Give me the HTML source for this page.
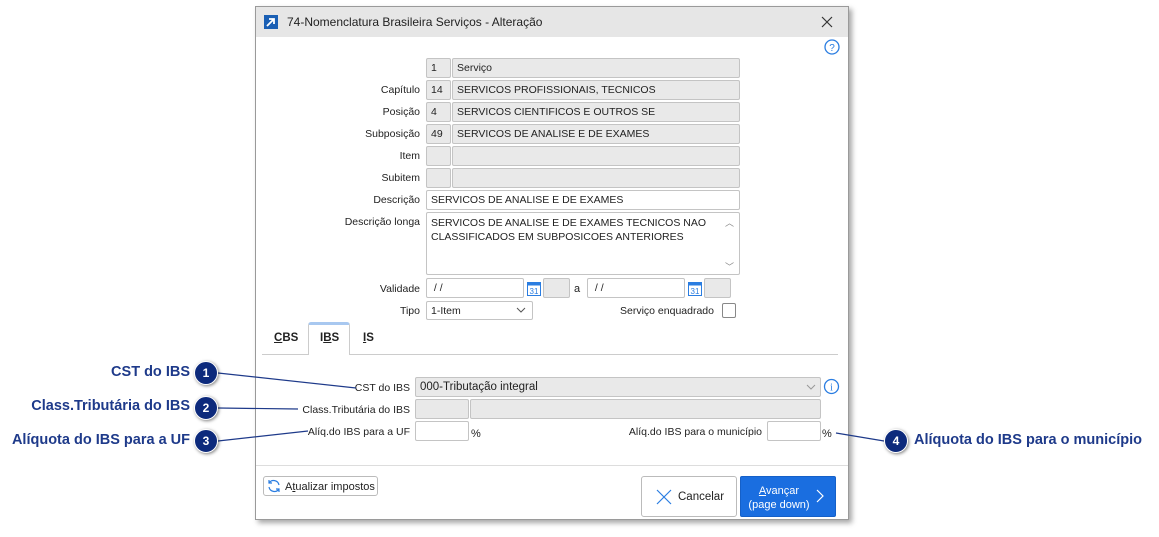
<!DOCTYPE html>
<html><head><meta charset="utf-8"><style>
*{box-sizing:border-box;margin:0;padding:0}
body{width:1159px;height:537px;background:#fff;position:relative;overflow:hidden;font-family:"Liberation Sans",sans-serif;font-size:11px;color:#222}
.a{position:absolute}
.dlg{left:255px;top:6px;width:594px;height:514px;background:#fff;border:1px solid #9a9a9a;box-shadow:3px 3px 5px rgba(0,0,0,.35)}
.title{left:0;top:0;width:592px;height:30px;background:#e6e6e6}
.f{position:absolute;height:20px;border:1px solid #c4c4c4;border-radius:2px;background:#e9e9e9;padding:3px 4px;white-space:nowrap;overflow:hidden;font-size:10.5px}
.w{background:#fff}
.l{position:absolute;text-align:right;white-space:nowrap;font-size:10.5px}
.cl{position:absolute;color:#1e3a8a;font-weight:bold;font-size:14.5px;white-space:nowrap}
.c{position:absolute;width:24px;height:24px;border-radius:50%;background:#0d2a7c;color:#fff;font-weight:bold;font-size:12px;text-align:center;line-height:22px;box-shadow:1px 1px 3px rgba(0,0,0,.5);border:1px solid #fff}
.btn{position:absolute;border:1px solid #bbb;border-radius:3px;background:#fff}
</style></head><body>
<div class="a dlg">
 <div class="a title"></div>
 <div class="a" style="left:8px;top:8px;width:14px;height:14px;background:#1a5fb4"><svg width="14" height="14"><path d="M3 11 L10 4 M5 4 H10 V9" stroke="#fff" stroke-width="1.8" fill="none"/></svg></div>
 <div class="a" style="left:31px;top:8px;font-size:12px;color:#222">74-Nomenclatura Brasileira Serviços - Alteração</div>
 <svg class="a" style="left:565px;top:9px" width="12" height="12"><path d="M1 1L11 11M11 1L1 11" stroke="#333" stroke-width="1.2"/></svg>
 <svg class="a" style="left:568px;top:32px" width="16" height="16"><circle cx="8" cy="8" r="7" stroke="#2a7de1" stroke-width="1.3" fill="none"/><text x="8" y="12" font-size="10" fill="#2a7de1" text-anchor="middle" font-family="Liberation Sans">?</text></svg>
</div>
<svg class="a" style="left:0;top:0;z-index:5" width="1159" height="537">
<g stroke="#1e3a8a" stroke-width="1.2" fill="none">
<line x1="218" y1="373" x2="356" y2="388"/>
<line x1="218" y1="408" x2="298" y2="409"/>
<line x1="218" y1="441" x2="308" y2="431"/>
<line x1="884" y1="441" x2="836" y2="433"/>
</g></svg>
<!-- form rows -->
<div class="f" style="left:426px;top:58px;width:25px">1</div><div class="f" style="left:452px;top:58px;width:288px">Serviço</div>
<div class="l" style="top:84px;left:330px;width:90px">Capítulo</div>
<div class="f" style="left:426px;top:80px;width:25px">14</div><div class="f" style="left:452px;top:80px;width:288px">SERVICOS PROFISSIONAIS, TECNICOS</div>
<div class="l" style="top:106px;left:330px;width:90px">Posição</div>
<div class="f" style="left:426px;top:102px;width:25px">4</div><div class="f" style="left:452px;top:102px;width:288px">SERVICOS CIENTIFICOS E OUTROS SE</div>
<div class="l" style="top:128px;left:330px;width:90px">Subposição</div>
<div class="f" style="left:426px;top:124px;width:25px">49</div><div class="f" style="left:452px;top:124px;width:288px">SERVICOS DE ANALISE E DE EXAMES</div>
<div class="l" style="top:150px;left:330px;width:90px">Item</div>
<div class="f" style="left:426px;top:146px;width:25px"></div><div class="f" style="left:452px;top:146px;width:288px"></div>
<div class="l" style="top:172px;left:330px;width:90px">Subitem</div>
<div class="f" style="left:426px;top:168px;width:25px"></div><div class="f" style="left:452px;top:168px;width:288px"></div>
<div class="l" style="top:194px;left:330px;width:90px">Descrição</div>
<div class="f w" style="left:426px;top:190px;width:314px">SERVICOS DE ANALISE E DE EXAMES</div>
<div class="l" style="top:216px;left:300px;width:120px">Descrição longa</div>
<div class="f w" style="left:426px;top:212px;width:314px;height:63px;line-height:14px;white-space:normal;padding-right:20px">SERVICOS DE ANALISE E DE EXAMES TECNICOS NAO CLASSIFICADOS EM SUBPOSICOES ANTERIORES</div>
<div class="a" style="left:725px;top:216px;color:#888;font-size:9px">︿</div>
<div class="a" style="left:725px;top:260px;color:#888;font-size:9px">﹀</div>
<div class="l" style="top:283px;left:330px;width:90px">Validade</div>
<div class="f w" style="left:426px;top:278px;width:98px">&nbsp;/ /</div>
<svg class="a" style="left:526px;top:279px" width="16" height="18"><rect x="1.5" y="3.5" width="13" height="13" fill="#fff" stroke="#2a7de1"/><rect x="1.5" y="3.5" width="13" height="3" fill="#2a7de1"/><text x="8" y="15" font-size="8" fill="#2a7de1" text-anchor="middle" font-family="Liberation Sans">31</text></svg>
<div class="f" style="left:543px;top:278px;width:27px"></div>
<div class="a" style="left:574px;top:283px">a</div>
<div class="f w" style="left:587px;top:278px;width:98px">&nbsp;/ /</div>
<svg class="a" style="left:687px;top:279px" width="16" height="18"><rect x="1.5" y="3.5" width="13" height="13" fill="#fff" stroke="#2a7de1"/><rect x="1.5" y="3.5" width="13" height="3" fill="#2a7de1"/><text x="8" y="15" font-size="8" fill="#2a7de1" text-anchor="middle" font-family="Liberation Sans">31</text></svg>
<div class="f" style="left:704px;top:278px;width:27px"></div>
<div class="l" style="top:305px;left:330px;width:90px">Tipo</div>
<div class="f w" style="left:426px;top:301px;width:107px;height:19px">1-Item</div>
<svg class="a" style="left:516px;top:306px" width="10" height="8"><path d="M1 2L5 6L9 2" stroke="#555" fill="none"/></svg>
<div class="a" style="left:620px;top:305px;font-size:10.5px">Serviço enquadrado</div>
<div class="a" style="left:722px;top:303px;width:14px;height:15px;border:1px solid #888;border-radius:2px"></div>
<!-- tabs -->
<div class="a" style="left:262px;top:354px;width:576px;height:1px;background:#ccc"></div>
<div class="a" style="left:308px;top:322px;width:42px;height:33px;background:#fff;border:1px solid #ccc;border-bottom:none;border-top:3px solid #a8c8f0;border-radius:3px 3px 0 0"></div>
<div class="a" style="left:274px;top:332px;font-weight:bold;font-size:11.5px"><u>C</u>BS</div>
<div class="a" style="left:320px;top:332px;font-weight:bold;font-size:11.5px">I<u>B</u>S</div>
<div class="a" style="left:363px;top:332px;font-weight:bold;font-size:11.5px"><u>I</u>S</div>
<div class="l" style="top:382px;left:300px;width:110px">CST do IBS</div>
<div class="f" style="left:415px;top:377px;width:406px;font-size:11.5px;padding-top:3px">000-Tributação integral</div>
<svg class="a" style="left:806px;top:383px" width="10" height="8"><path d="M1 2L5 6L9 2" stroke="#999" fill="none"/></svg>
<svg class="a" style="left:823px;top:378px" width="17" height="17"><circle cx="8.5" cy="8.5" r="7" stroke="#2a7de1" stroke-width="1.3" fill="none"/><text x="8.5" y="12.5" font-size="10" fill="#2a7de1" text-anchor="middle" font-family="Liberation Serif">i</text></svg>
<div class="l" style="top:404px;left:260px;width:150px">Class.Tributária do IBS</div>
<div class="f" style="left:415px;top:399px;width:54px"></div><div class="f" style="left:470px;top:399px;width:351px"></div>
<div class="l" style="top:426px;left:260px;width:150px">Alíq.do IBS para a UF</div>
<div class="f w" style="left:415px;top:421px;width:54px"></div>
<div class="a" style="left:471px;top:428px">%</div>
<div class="l" style="top:426px;left:600px;width:162px">Alíq.do IBS para o município</div>
<div class="f w" style="left:767px;top:421px;width:54px"></div>
<div class="a" style="left:822px;top:428px">%</div>
<!-- footer -->
<div class="a" style="left:256px;top:465px;width:592px;height:1px;background:#ddd"></div>
<div class="btn" style="left:263px;top:476px;width:115px;height:20px"></div>
<svg class="a" style="left:266px;top:478px" width="16" height="16"><path d="M13 7A5.5 5.5 0 0 0 3 5M3 2V5H6M3 9A5.5 5.5 0 0 0 13 11M13 14V11H10" stroke="#2a7de1" stroke-width="1.2" fill="none"/></svg>
<div class="a" style="left:285px;top:481px;font-size:11px">A<u>t</u>ualizar impostos</div>
<div class="btn" style="left:641px;top:476px;width:96px;height:41px"></div>
<svg class="a" style="left:656px;top:489px" width="16" height="16"><path d="M1 1L15 15M15 1L1 15" stroke="#2a7de1" stroke-width="1.2"/></svg>
<div class="a" style="left:678px;top:491px;font-size:11.5px">Cancelar</div>
<div class="a" style="left:740px;top:476px;width:96px;height:41px;background:#1a6ee0;border:1px solid #1560c8;border-radius:2px"></div>
<div class="a" style="left:742px;top:484px;width:74px;text-align:center;color:#fff;font-size:11px;line-height:14px;white-space:nowrap"><u>A</u>vançar<br>(page down)</div>
<svg class="a" style="left:816px;top:489px" width="8" height="14"><path d="M1 1L7 7L1 13" stroke="#fff" stroke-width="1.2" fill="none"/></svg>
<!-- callouts -->
<div class="cl" style="right:969px;top:364px">CST do IBS</div>
<div class="c" style="left:194px;top:361px;z-index:6">1</div>
<div class="cl" style="right:969px;top:398px">Class.Tributária do IBS</div>
<div class="c" style="left:194px;top:396px;z-index:6">2</div>
<div class="cl" style="right:969px;top:432px">Alíquota do IBS para a UF</div>
<div class="c" style="left:194px;top:429px;z-index:6">3</div>
<div class="c" style="left:884px;top:429px;z-index:6">4</div>
<div class="cl" style="left:914px;top:432px">Alíquota do IBS para o município</div>
</body></html>
